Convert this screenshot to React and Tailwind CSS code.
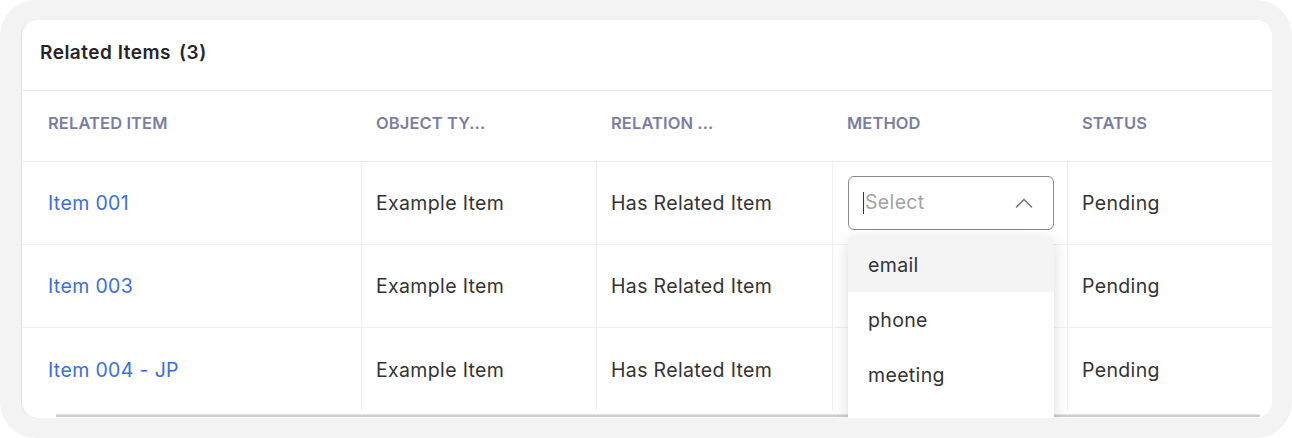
import React from "react";

const rows = [
  { name: "Item 001", type: "Example Item", rel: "Has Related Item", status: "Pending", select: true },
  { name: "Item 003", type: "Example Item", rel: "Has Related Item", status: "Pending" },
  { name: "Item 004 - JP", type: "Example Item", rel: "Has Related Item", status: "Pending" },
];

const cols = "grid grid-cols-[339px_235px_236px_235px_1fr]";

export default function App() {
  return (
    <div className="w-[1292px] h-[438px] bg-white" style={{ fontFamily: "Inter, 'Noto Sans', sans-serif" }}>
      <div className="w-full h-full bg-[#f3f3f3] rounded-[36px] pt-[20px] pl-[21px] pr-[20px] pb-[20px]">
        <div className="relative h-[398px] bg-white rounded-[16px] border-l border-[#dfe4ee] overflow-hidden">
          <div className="h-[70px] flex items-center pb-[4px] pl-[18px] text-[19px] font-semibold text-[#262626] tracking-[0.5px]">
            Related Items<span className="ml-[8px]">(3)</span>
          </div>
          <div className={`${cols} h-[72px] border-t border-b border-[#ececec] items-center pb-[5px] text-[16.5px] font-semibold text-[#7a7ea3] uppercase tracking-[0.1px]`}>
            <div className="pl-[26px]">Related Item</div>
            <div className="pl-[15px]">Object Ty...</div>
            <div className="pl-[15px]">Relation ...</div>
            <div className="pl-[15px]">Method</div>
            <div className="pl-[15px]">Status</div>
          </div>
          {rows.map((r, i) => (
            <div key={i} className={`${cols} h-[83px] ${i < 2 ? "border-b border-[#efefef]" : ""} text-[19.5px] tracking-[0.35px] text-[#333]`}>
              <div className="pl-[26px] pt-[2px] flex items-center text-[#3a6ee0]">{r.name}</div>
              <div className="pl-[14px] pt-[2px] flex items-center border-l border-[#efefef]">{r.type}</div>
              <div className="pl-[14px] pt-[2px] flex items-center border-l border-[#efefef]">{r.rel}</div>
              <div className="pl-[15px] flex items-center border-l border-[#efefef]">
                {r.select && (
                  <div className="w-[206px] h-[54px] border border-[#8a8a8a] rounded-[6px] flex items-center justify-between pl-[14px] pr-[20px]">
                    <span className="flex items-center text-[#a3a3a3]">
                      <span className="w-[1px] h-[22px] bg-[#333] mr-[1px]"></span>
                      Select
                    </span>
                    <svg width="18" height="10" viewBox="0 0 18 10" fill="none">
                      <path d="M1.5 9L9 1.5L16.5 9" stroke="#777" strokeWidth="1.6" strokeLinecap="round" strokeLinejoin="round" />
                    </svg>
                  </div>
                )}
              </div>
              <div className="pl-[14px] pt-[2px] flex items-center border-l border-[#efefef]">{r.status}</div>
            </div>
          ))}
          <div className="absolute left-[34px] right-[12px] bottom-[1px] h-[3px] bg-[#cfcfcf] border-t border-[#e4e4e4]"></div>
          <div className="absolute left-[826px] top-[216px] w-[206px] h-[200px] bg-white rounded-t-[6px] shadow-[0_4px_16px_rgba(0,0,0,0.14)] text-[19.5px] tracking-[0.35px] text-[#333]">
            <div className="h-[56px] flex items-center pt-[4px] pl-[20px] bg-[#f4f4f4] rounded-t-[6px]">email</div>
            <div className="h-[55px] flex items-center pt-[2px] pl-[20px]">phone</div>
            <div className="h-[55px] flex items-center pt-[2px] pl-[20px]">meeting</div>
          </div>
        </div>
      </div>
    </div>
  );
}
